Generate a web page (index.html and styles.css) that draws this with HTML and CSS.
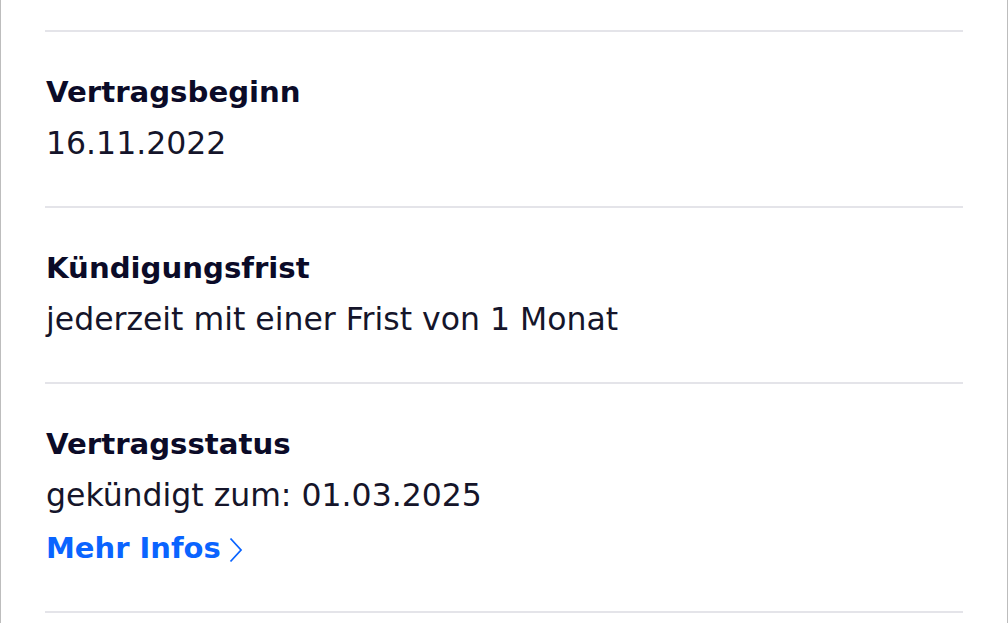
FILE: index.html
```html
<!DOCTYPE html>
<html lang="de">
<head>
    <meta charset="UTF-8">
    <meta name="viewport" content="width=device-width, initial-scale=1.0">
    <title>Vertragsdetails</title>
    <link rel="stylesheet" href="styles.css">
</head>
<body>
    <div class="panel">
        <div class="info-list">
            <div class="info-item">
                <h3 class="info-label">Vertragsbeginn</h3>
                <p class="info-value">16.11.2022</p>
            </div>
            <div class="info-item">
                <h3 class="info-label">Kündigungsfrist</h3>
                <p class="info-value">jederzeit mit einer Frist von 1 Monat</p>
            </div>
            <div class="info-item">
                <h3 class="info-label">Vertragsstatus</h3>
                <p class="info-value">gekündigt zum: 01.03.2025</p>
                <a class="more-link" href="#">Mehr Infos<svg class="chevron" width="14" height="26" viewBox="0 0 14 26"><path d="M1.5 1.5 L12 13 L1.5 24.5" fill="none" stroke="currentColor" stroke-width="1.8"/></svg></a>
            </div>
            <div class="info-item info-item-last"></div>
        </div>
    </div>
</body>
</html>
```

FILE: styles.css
```css
html, body {
    margin: 0;
    padding: 0;
    background-color: #fff;
}
body {
    font-family: "DejaVu Sans", Roboto, sans-serif;
    color: #14142b;
}
.panel {
    min-height: 623px;
    box-sizing: border-box;
    border-left: 1px solid #bdbdbd;
    border-right: 1px solid #bdbdbd;
    padding: 30px 44px 0 44px;
}
.info-item {
    border-top: 2px solid #e4e4e9;
    padding: 35px 1px 37px 1px;
}
.info-item-last {
    padding: 0;
}
.info-label {
    margin: 0;
    font-weight: 700;
    font-size: 29.2px;
    line-height: 51px;
    color: #0b0b28;
}
.info-value {
    margin: 0;
    font-size: 31.5px;
    line-height: 51px;
    color: #15152a;
}
.more-link {
    display: flex;
    width: fit-content;
    align-items: center;
    gap: 8px;
    margin-top: 2px;
    font-weight: 700;
    font-size: 29px;
    line-height: 51px;
    color: #0a64ff;
    text-decoration: none;
}
.chevron {
    margin-top: 2px;
}
```
